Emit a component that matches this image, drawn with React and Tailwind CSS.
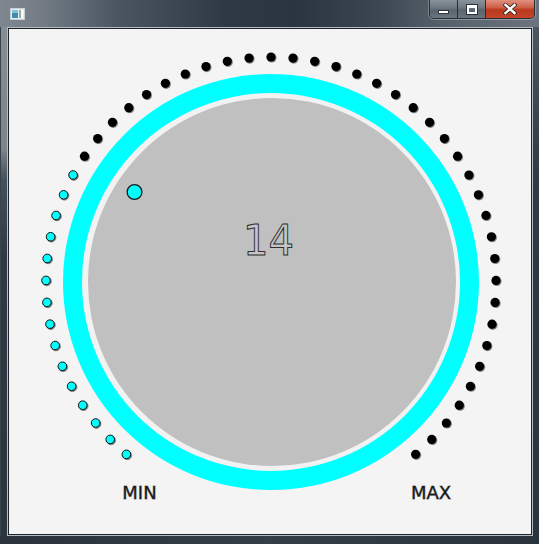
import React from 'react'

// dial geometry, in page pixels
const CX = 271
const CY = 282
const DOT_R = 225
const STEPS = 50
const VALUE = 14

function dotAt(i) {
  const a = ((-140 + (280 * i) / STEPS) * Math.PI) / 180
  return { x: CX + DOT_R * Math.sin(a), y: CY - DOT_R * Math.cos(a) }
}

function WindowIcon() {
  return (
    <svg width="15" height="12" viewBox="0 0 15 12">
      <rect x="0.5" y="0.5" width="14" height="11" fill="#e8ecef" stroke="#c9d0d5" />
      <rect x="2" y="2" width="6" height="8" fill="#3f8fa8" />
      <rect x="2" y="2" width="6" height="3" fill="#7fc3d6" />
      <rect x="9" y="2" width="2" height="8" fill="#9aa6ae" />
      <rect x="11.5" y="2" width="1.5" height="8" fill="#ffffff" />
    </svg>
  )
}

function CaptionButtons() {
  return (
    <div className="flex h-[19px] rounded-b-[5px] border border-t-0 border-[#262d35] overflow-hidden shadow-[0_1px_0_0_rgba(255,255,255,0.3),1px_0_0_0_rgba(255,255,255,0.25),-1px_0_0_0_rgba(255,255,255,0.25)]">
      <div className="w-[28px] flex justify-center border-r border-[#262d35] bg-[linear-gradient(180deg,#8a939b_0%,#6d7780_45%,#59636d_55%,#6b757e_100%)]">
        <div className="mt-[10px] w-[11px] h-[4px] bg-white border border-[#2c333a]" />
      </div>
      <div className="w-[28px] flex justify-center border-r border-[#262d35] bg-[linear-gradient(180deg,#8a939b_0%,#6d7780_45%,#59636d_55%,#6b757e_100%)]">
        <div className="mt-[5px] w-[10px] h-[9px] border-2 border-t-[3px] border-white outline outline-1 outline-[#2c333a]" />
      </div>
      <div className="w-[48px] flex justify-center items-start bg-[linear-gradient(180deg,#e2917f_0%,#d0624a_40%,#b9391f_55%,#c5452a_100%)]">
        <svg width="14" height="12" viewBox="0 0 14 12" className="mt-[3px]">
          <path d="M2.5 2 L11.5 10 M11.5 2 L2.5 10" stroke="#3a2420" strokeWidth="4.2" strokeLinecap="square" />
          <path d="M2.5 2 L11.5 10 M11.5 2 L2.5 10" stroke="#ffffff" strokeWidth="2.4" strokeLinecap="square" />
        </svg>
      </div>
    </div>
  )
}

function Dial() {
  const dots = Array.from({ length: STEPS + 1 }, (_, i) => ({ i, ...dotAt(i) }))
  return (
    <svg width="522" height="505" viewBox="9 29 522 505" className="block">
      <defs>
        <filter id="dotShadow" x="-50%" y="-50%" width="200%" height="200%">
          <feDropShadow dx="0.8" dy="0.9" stdDeviation="0.6" floodColor="#000" floodOpacity="0.55" />
        </filter>
      </defs>

      {/* ring and face */}
      <circle cx={CX} cy={CY} r="208" fill="#00ffff" />
      <circle cx={CX} cy={CY} r="189" fill="#f2f2f2" />
      <circle cx={CX + 1} cy={CY} r="184" fill="#c0c0c0" />

      {/* scale dots */}
      {dots.map(d =>
        d.i <= VALUE ? (
          <circle key={d.i} cx={d.x} cy={d.y} r="4.3" fill="#00ffff" stroke="#111" strokeWidth="1" filter="url(#dotShadow)" />
        ) : (
          <circle key={d.i} cx={d.x} cy={d.y} r="4.6" fill="#000" filter="url(#dotShadow)" />
        )
      )}

      {/* knob marker */}
      <circle cx="134.5" cy="192" r="7.4" fill="#00ffff" stroke="#1a1a1a" strokeWidth="1.3" />

      <text
        x="243"
        y="255"
        fontFamily="DejaVu Sans, Verdana, sans-serif"
        fontSize="43"
        textLength="51"
        lengthAdjust="spacingAndGlyphs"
        fill="#c6c6c6"
        stroke="#2e2e2e"
        strokeWidth="1"
      >
        {VALUE}
      </text>

      <text x="139.5" y="499" textAnchor="middle" fontFamily="DejaVu Sans, Verdana, sans-serif" fontSize="18" fill="#1a1a1a" stroke="#8c8c8c" strokeWidth="0.8" paintOrder="stroke">
        MIN
      </text>
      <text x="431" y="499" textAnchor="middle" fontFamily="DejaVu Sans, Verdana, sans-serif" fontSize="18" fill="#1a1a1a" stroke="#8c8c8c" strokeWidth="0.8" paintOrder="stroke">
        MAX
      </text>
    </svg>
  )
}

export default function App() {
  return (
    <div className="w-[539px] h-[544px] flex flex-col overflow-hidden bg-[#2c363f]">
      {/* title bar */}
      <div className="h-[27px] flex items-start bg-[linear-gradient(90deg,#7f8891_0%,#737c85_8%,#4a5560_22%,#2e3944_42%,#2b3540_55%,#3b4652_70%,#56606a_82%,#6b747c_100%)]">
        <div className="ml-[10px] mt-[8px]">
          <WindowIcon />
        </div>
        <div className="ml-auto mr-[4px]">
          <CaptionButtons />
        </div>
      </div>

      {/* frame + client */}
      <div className="flex h-[509px]">
        <div className="w-[7px] border-l border-[#3c444b] bg-[linear-gradient(180deg,#858d95_0%,#7c848c_24%,#44505a_30%,#2e3943_45%,#2b353e_100%)]" />
        <div className="w-[526px] border border-[#b4bcc3]">
          <div className="h-full border border-[#1c242b] bg-[#f4f4f4]">
            <Dial />
          </div>
        </div>
        <div className="w-[6px] bg-[linear-gradient(180deg,#4d565e_0%,#2e3943_30%,#2a343d_100%)]" />
      </div>
      <div className="h-[8px] bg-[linear-gradient(90deg,#2a333b_0%,#343e47_50%,#2a333b_100%)]" />
    </div>
  )
}
